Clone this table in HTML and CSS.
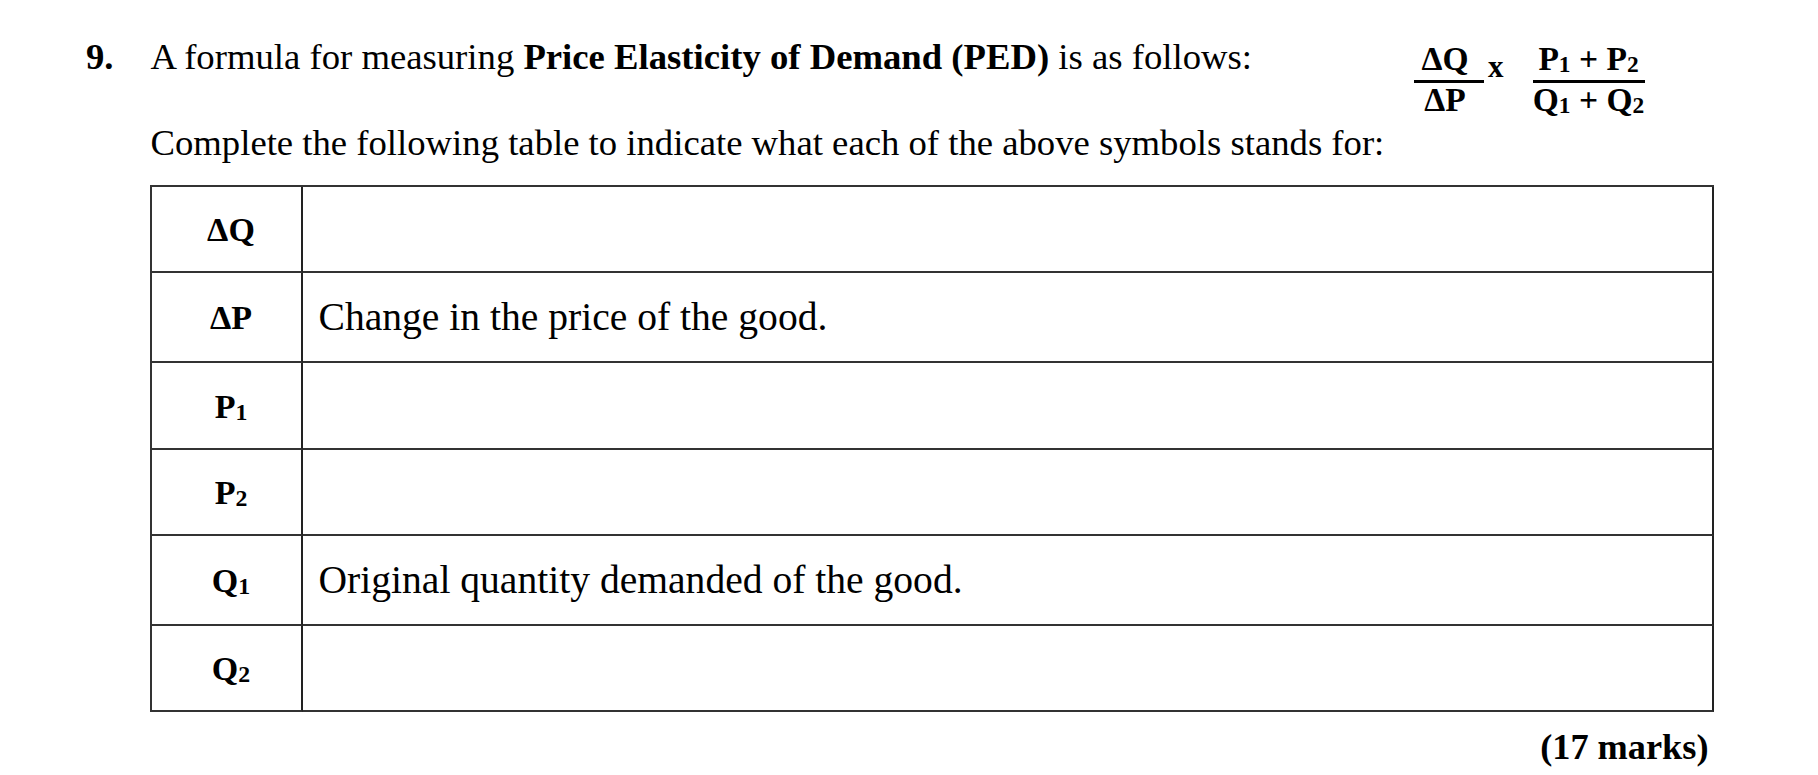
FILE: index.html
```html
<!DOCTYPE html>
<html lang="en">
<head>
<meta charset="utf-8">
<title>Question 9 – Price Elasticity of Demand</title>
<link rel="stylesheet" href="styles.css">
</head>
<body>
<div class="question">
  <div class="num">9.</div>
  <div class="content">
    <div class="line1">
      <p class="intro">A formula for measuring <b>Price Elasticity of Demand (PED)</b> is as follows:</p>
      <div class="formula">
        <div class="frac frac1">
          <div class="top">ΔQ</div>
          <div class="bottom">ΔP</div>
        </div>
        <div class="times">x</div>
        <div class="frac frac2">
          <div class="top">P<span class="s">1</span> + P<span class="s">2</span></div>
          <div class="bottom">Q<span class="s">1</span> + Q<span class="s">2</span></div>
        </div>
      </div>
    </div>
    <p class="instr">Complete the following table to indicate what each of the above symbols stands for:</p>
    <table class="sym">
      <colgroup><col class="c1"><col class="c2"></colgroup>
      <tbody>
        <tr class="r1"><td class="lab">ΔQ</td><td class="desc"></td></tr>
        <tr class="r2"><td class="lab">ΔP</td><td class="desc">Change in the price of the good.</td></tr>
        <tr class="r3"><td class="lab">P<span class="s">1</span></td><td class="desc"></td></tr>
        <tr class="r4"><td class="lab">P<span class="s">2</span></td><td class="desc"></td></tr>
        <tr class="r5"><td class="lab">Q<span class="s">1</span></td><td class="desc">Original quantity demanded of the good.</td></tr>
        <tr class="r6"><td class="lab">Q<span class="s">2</span></td><td class="desc"></td></tr>
      </tbody>
    </table>
    <p class="marks">(17 marks)</p>
  </div>
</div>
</body>
</html>
```

FILE: styles.css
```css
html, body {
  margin: 0;
  padding: 0;
  background: #ffffff;
}
body {
  font-family: "Liberation Serif", "Times New Roman", serif;
  color: #000;
  overflow: hidden;
}
p { margin: 0; }

.question {
  display: grid;
  grid-template-columns: 64.5px 1564px;
  padding: 36px 0 0 86px;
}
.num {
  font-weight: bold;
  font-size: 36.7px;
  line-height: 42px;
}
.line1 {
  display: flex;
  height: 42px;
}
.intro {
  font-size: 36.7px;
  line-height: 42px;
  white-space: nowrap;
}
.formula {
  display: flex;
  align-items: flex-start;
  margin: 6px 70px 0 auto;
  font-weight: bold;
  font-size: 33.5px;
  line-height: 34px;
  white-space: nowrap;
}
.frac {
  display: flex;
  flex-direction: column;
  text-align: center;
}
.frac .top {
  border-bottom: 3px solid #000;
  padding-bottom: 4px;
}
.frac1 { width: 70px; }
.frac1 .top, .frac1 .bottom { padding-right: 8px; }
.frac2 { width: 112px; }
.times {
  font-size: 31px;
  margin: 8px 29px 0 4px;
}
.s {
  font-size: 0.7em;
  vertical-align: -0.1em;
  line-height: 0;
}
.instr {
  font-size: 36.7px;
  line-height: 42px;
  margin-top: 44.4px;
  white-space: nowrap;
}

.sym {
  margin: 21px 0 0 -1px;
  width: 1564px;
  border-collapse: separate;
  border-spacing: 0;
  table-layout: fixed;
  border-top: 2px solid #333;
  border-left: 2px solid #333;
}
.c1 { width: 151px; }
.sym td {
  border-right: 2px solid #222;
  border-bottom: 2px solid #333;
  padding: 0;
  vertical-align: middle;
  box-sizing: border-box;
}
.lab {
  font-weight: bold;
  font-size: 34px;
  text-align: center;
  padding: 2px 0 0 10px !important;
}
.desc {
  font-size: 39.6px;
  padding: 0 0 0 16px !important;
  white-space: nowrap;
}
.r1 td { height: 86px; }
.r2 td { height: 90px; }
.r3 td { height: 87px; }
.r4 td { height: 86px; }
.r5 td { height: 90px; }
.r6 td { height: 86px; }

.marks {
  font-weight: bold;
  font-size: 36.3px;
  line-height: 42px;
  text-align: right;
  margin-top: 14px;
  padding-right: 6px;
}
```
